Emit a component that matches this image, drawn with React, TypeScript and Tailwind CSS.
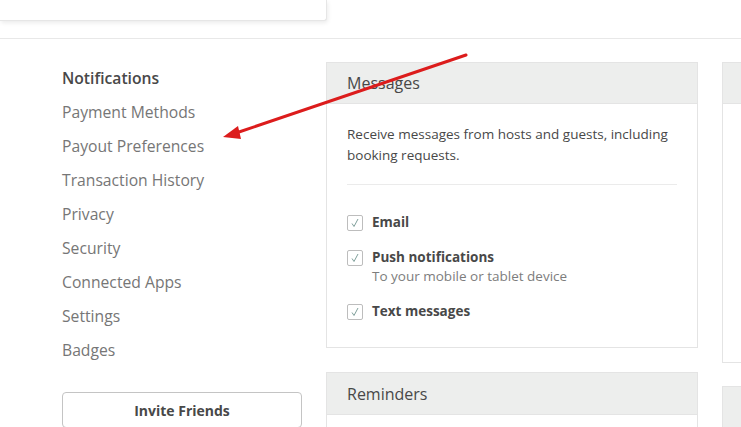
import React from "react";

const nav = [
  "Notifications",
  "Payment Methods",
  "Payout Preferences",
  "Transaction History",
  "Privacy",
  "Security",
  "Connected Apps",
  "Settings",
  "Badges",
];

function Check() {
  return (
    <div className="w-4 h-4 border border-[#bdbdbd] rounded-[2px] bg-white flex items-center justify-center shrink-0 mt-[2px]">
      <svg width="12" height="12" viewBox="0 0 12 12">
        <path d="M3 6.5 L5 9.5 L9 2" fill="none" stroke="#7fa09b" strokeWidth="1" />
      </svg>
    </div>
  );
}

function Row({ label, sub }: { label: string; sub?: string }) {
  return (
    <div className="flex gap-[9px] items-start">
      <Check />
      <div className="flex flex-col">
        <span className="text-[13.5px] leading-[19px] font-bold text-[#484848]">{label}</span>
        {sub && <span className="text-[13.5px] leading-[19px] text-[#7d7d7d]">{sub}</span>}
      </div>
    </div>
  );
}

export default function App() {
  return (
    <div
      className="relative w-full h-[427px] overflow-hidden bg-white"
      style={{ fontFamily: '"Open Sans", "Liberation Sans", sans-serif' }}
    >
      <div className="w-[327px] h-[21px] bg-white border-r border-b border-[#e6e6e6] rounded-br-[3px] shadow-[1px_2px_4px_rgba(0,0,0,0.08)]" />
      <div className="mt-[17px] border-t border-[#e8e8e8]" />
      <div className="flex pl-[62px] pt-[22px] gap-[24px]">
        <div className="w-[240px] shrink-0 flex flex-col">
          {nav.map((n, i) => (
            <div
              key={n}
              className={
                i === 0
                  ? "h-[34px] leading-[34px] text-[15.7px] font-semibold text-[#484848]"
                  : "h-[34px] leading-[34px] text-[15.7px] text-[#767676]"
              }
            >
              {n}
            </div>
          ))}
          <div className="mt-[25px] h-[36px] border border-[#c4c4c4] rounded-[4px] flex items-center justify-center text-[14px] font-bold text-[#484848]">
            Invite Friends
          </div>
        </div>
        <div className="w-[372px] shrink-0 flex flex-col gap-[24px] pt-[1px]">
          <div className="border border-[#e4e4e4] bg-white">
            <div className="h-[41px] bg-[#edeeed] border-b border-[#e4e4e4] px-[20px] flex items-center text-[16px] text-[#484848]">
              Messages
            </div>
            <div className="px-[20px] pt-[20px] pb-[26px]">
              <p className="text-[13.5px] leading-[21px] text-[#484848] whitespace-nowrap">
                Receive messages from hosts and guests, including
                <br />
                booking requests.
              </p>
              <div className="mt-[18px] border-t border-[#ebebeb]" />
              <div className="pt-[28px] flex flex-col gap-[16px]">
                <Row label="Email" />
                <Row label="Push notifications" sub="To your mobile or tablet device" />
                <Row label="Text messages" />
              </div>
            </div>
          </div>
          <div className="border border-[#e4e4e4] bg-white h-[80px]">
            <div className="h-[42px] bg-[#edeeed] border-b border-[#e4e4e4] px-[20px] flex items-center text-[16px] text-[#484848]">
              Reminders
            </div>
          </div>
        </div>
        <div className="w-[100px] shrink-0 flex flex-col gap-[23px] pt-[1px]">
          <div className="h-[301px] border border-[#e4e4e4] bg-white">
            <div className="h-[41px] bg-[#edeeed] border-b border-[#e4e4e4]" />
          </div>
          <div className="h-[80px] border border-[#e4e4e4] bg-white">
            <div className="h-[42px] bg-[#edeeed] border-b border-[#e4e4e4]" />
          </div>
        </div>
      </div>
      <svg className="absolute inset-0 pointer-events-none" width="741" height="427">
        <line x1="466" y1="55" x2="236" y2="133" stroke="#dc1c1c" strokeWidth="3" strokeLinecap="round" />
        <polygon points="223,137 238,126 241,139" fill="#dc1c1c" />
      </svg>
    </div>
  );
}
